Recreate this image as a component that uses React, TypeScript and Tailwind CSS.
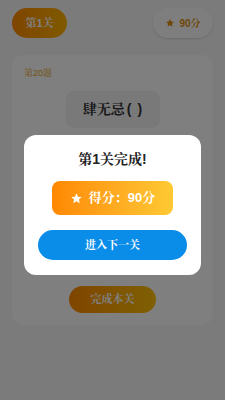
import React from "react";

function Star({ className }: { className?: string }) {
  return (
    <svg viewBox="0 0 24 24" className={className} fill="currentColor">
      <path d="M12 2.5l2.9 6.1 6.6.8-4.9 4.6 1.3 6.6L12 17.3l-5.9 3.3 1.3-6.6L2.5 9.4l6.6-.8z" />
    </svg>
  );
}

export default function App() {
  return (
    <div className="relative w-[225px] h-[400px] overflow-hidden bg-[#f7f7f7] font-[Arial,'Liberation_Sans','Noto_Serif_CJK_SC',serif]">
      <div className="flex items-center justify-between px-3 pt-[8px]">
        <div className="h-[30px] w-[55px] rounded-full bg-gradient-to-r from-[#ff8a00] to-[#ffb300] flex items-center justify-center text-white text-[11px] font-bold">
          第1关
        </div>
        <div className="h-[30px] w-[60px] rounded-full bg-white/80 flex items-center justify-center gap-1 text-[#e0900b] text-[10px] font-bold shadow-sm">
          <Star className="w-[10px] h-[10px]" />
          <span>90分</span>
        </div>
      </div>
      <div className="mx-3 mt-[17px] h-[270px] rounded-xl bg-white flex flex-col items-center px-3 pt-[12px]">
        <div className="self-start text-[9px] text-[#e8a317]">第20题</div>
        <div className="mt-[10px] w-[94px] h-[37px] rounded-lg bg-[#f3f3f3] flex items-center justify-center text-[14px] font-bold text-[#333]">
          <span>肆无忌</span>
          <span className="ml-[2px]">(</span>
          <span className="w-[6px]"></span>
          <span>)</span>
        </div>
        <div className="mt-[8px] w-[75px] h-[36px] rounded-lg border-2 border-[#4caf50] bg-[#e8f5e9]"></div>
        <div className="mt-[114px] w-[87px] h-[27px] rounded-full bg-gradient-to-r from-[#ff8a00] to-[#ffc107] flex items-center justify-center text-white text-[11px] font-bold">
          完成本关
        </div>
      </div>
      <div className="absolute inset-0 bg-black/50 flex items-start justify-center">
        <div className="mt-[135px] w-[177px] h-[140px] rounded-xl bg-white flex flex-col items-center pt-[15px]">
          <div className="text-[14px] font-bold text-[#222] leading-[18px]">第1关完成!</div>
          <div className="mt-[13px] w-[121px] h-[34px] rounded-lg bg-gradient-to-r from-[#ff8800] to-[#ffc933] flex items-center justify-center gap-[6px] text-white text-[13px] font-bold">
            <Star className="w-[13px] h-[13px]" />
            <span>得分：90分</span>
          </div>
          <div className="mt-[15px] w-[149px] h-[30px] rounded-full bg-[#0a8ce9] flex items-center justify-center text-white text-[11px] font-bold">
            进入下一关
          </div>
        </div>
      </div>
    </div>
  );
}
